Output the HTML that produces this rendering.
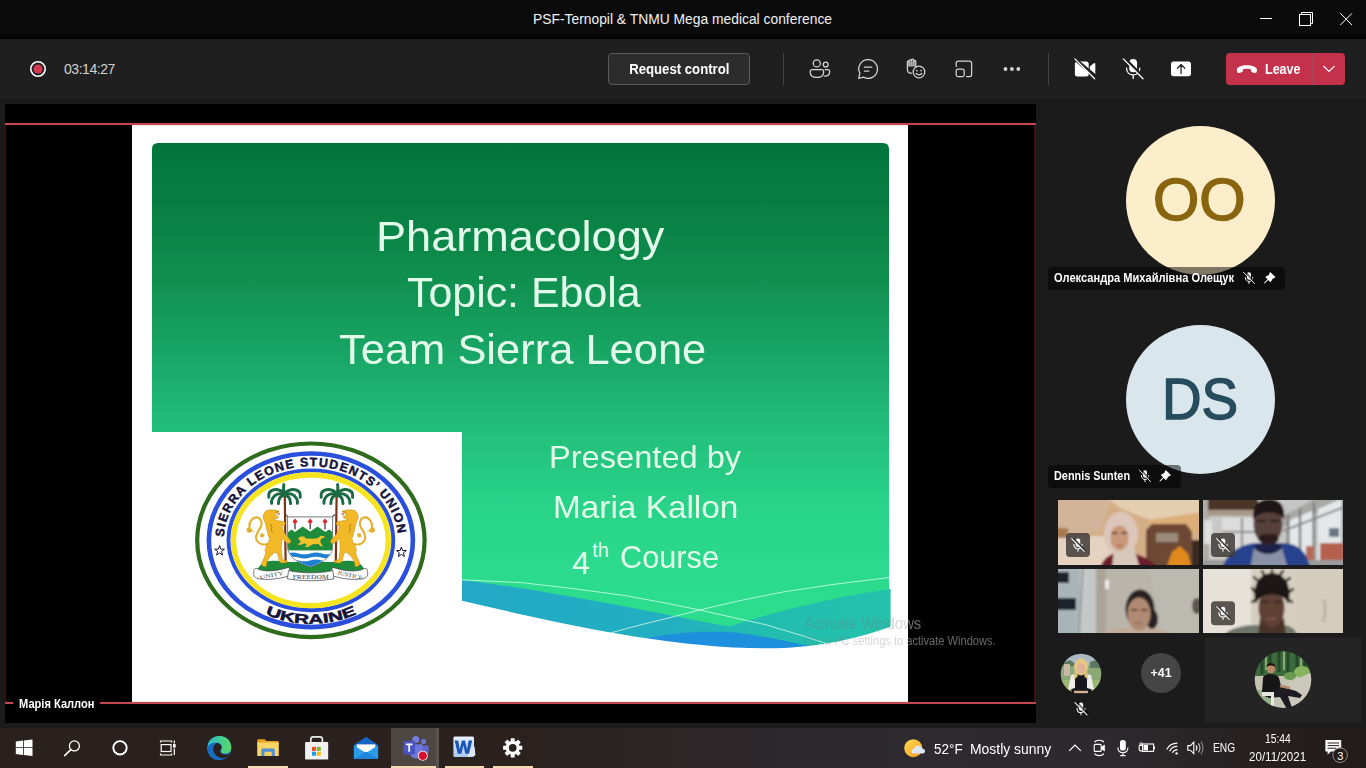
<!DOCTYPE html>
<html lang="en">
<head>
<meta charset="utf-8">
<title>PSF-Ternopil &amp; TNMU Mega medical conference</title>
<style>
*{margin:0;padding:0;box-sizing:border-box}
html,body{width:1366px;height:768px;overflow:hidden;background:#1b1b1b;font-family:"Liberation Sans",sans-serif;}
.abs{position:absolute}
#root{position:relative;width:1366px;height:768px;overflow:hidden;background:#1b1b1b}
/* title bar */
#titlebar{left:0;top:0;width:1366px;height:39px;background:linear-gradient(#0b0b0b 0,#0b0b0b 33px,#070707 34px,#060606 37px,#000 38px)}
#title{left:533px;top:10px;width:299px;height:18px;color:#f2f2f2;font-size:13.85px;line-height:18px;white-space:nowrap}
#title span{display:inline-block;transform-origin:0 50%}
/* toolbar */
#toolbar{left:0;top:39px;width:1366px;height:57px;background:#1f1f1f}
#subbar{left:0;top:96px;width:1366px;height:8px;background:linear-gradient(#222 0,#232323 2px,#1a1a1a 3px,#171717 5px,#1a1a1a 6px,#1b1b1b 8px)}
#rectime{left:64px;top:60px;color:#d2d2d2;font-size:14px;letter-spacing:-.45px;line-height:18px;white-space:nowrap}
#reqbtn{left:608px;top:53px;width:142px;height:32px;border:1px solid #5c5c5c;border-radius:4px;background:#2c2c2c;color:#fff;font-weight:bold;font-size:14px;line-height:30px;text-align:center;white-space:nowrap}
.vsep{width:1px;height:32px;top:53px;background:#454545}
#leave{left:1226px;top:53px;width:119px;height:32px;border-radius:4px;background:#c4314b}
#leave .div{left:86px;top:0;width:1px;height:32px;background:#a8485a}
#leave .txt{left:39px;top:7px;color:#fff;font-weight:bold;font-size:14px;line-height:18px}
/* stage */
#stage{left:5px;top:104px;width:1031px;height:619px;background:#000}
#slide{left:132px;top:125px;width:776px;height:577px;background:#fff;overflow:hidden}
.st{color:#e2fbea;white-space:nowrap}.st span{display:inline-block;transform-origin:0 50%}
.wm{position:absolute;top:6px;white-space:nowrap;font-size:16px;line-height:19px}.wm span{display:inline-block;transform-origin:0 50%}.wm .w1{transform:scaleX(.929)}.wm .w2{font-size:12px;line-height:15px;transform:scaleX(.924);position:relative;top:-3.4px}
.redh{height:2px;background:#c4444e}
/* right panel */
#panel{left:1036px;top:104px;width:330px;height:624px;background:#1b1b1b}
.avatar{border-radius:50%}
.big{font-size:58px;line-height:66px;white-space:nowrap}.big span{display:inline-block;transform-origin:0 50%}
.plabel span{display:inline-block;white-space:nowrap}
.plabel{height:23px;border-radius:4px;background:rgba(0,0,0,.5);color:#fff;font-size:12px;font-weight:bold;line-height:23px;white-space:nowrap}
/* taskbar */
#taskbar{left:0;top:728px;width:1366px;height:40px;background:linear-gradient(90deg,#2a201d 0,#2b211e 35%,#2c2628 52%,#2d2b2f 66%,#2c2a2d 82%,#262020 92%,#221b19 100%)}
.ul{top:766px;height:2px;background:#f7dbb0}
.tb-txt{color:#fff;white-space:nowrap}
</style>
</head>
<body>
<div id="root">

<!-- TITLE BAR -->
<div id="titlebar" class="abs"></div>
<div id="title" class="abs"><span>PSF-Ternopil &amp; TNMU Mega medical conference</span></div>
<svg class="abs" style="left:1250px;top:0" width="116" height="39" viewBox="0 0 116 39" fill="none" stroke="#fff" stroke-width="1">
  <path d="M10 18.5H22"/>
  <rect x="49.5" y="14.5" width="11" height="11"/>
  <path d="M51.5 14.5V12.5H62.5V23.5H60.5"/>
  <path d="M90.3 13.3L102 25M102 13.3L90.3 25"/>
</svg>

<!-- TOOLBAR -->
<div id="toolbar" class="abs"></div>
<div id="subbar" class="abs"></div>
<svg class="abs" style="left:28px;top:59px" width="20" height="20" viewBox="0 0 20 20"><circle cx="10" cy="10" r="7.2" fill="none" stroke="#fff" stroke-width="1.6"/><circle cx="10" cy="10" r="4.6" fill="#d6384f"/></svg>
<div id="rectime" class="abs">03:14:27</div>
<div id="reqbtn" class="abs"><span style="display:inline-block;transform:scaleX(.94)">Request control</span></div>
<div class="abs vsep" style="left:783px"></div>
<div class="abs vsep" style="left:1048px"></div>
<svg id="toolicons" class="abs" style="left:790px;top:50px" width="440" height="40" viewBox="790 50 440 40" fill="none" stroke="#d4d4d4" stroke-width="1.25" stroke-linecap="round" stroke-linejoin="round">
  <!-- people -->
  <circle cx="816.8" cy="63.4" r="3.55"/>
  <circle cx="825.7" cy="64.6" r="2.45"/>
  <path d="M812.2,69.6 H821.6 A2,2 0 0 1 823.6,71.6 V72.2 C823.6,75.6 820.6,77.4 816.9,77.4 C813.2,77.4 810.2,75.6 810.2,72.2 V71.6 A2,2 0 0 1 812.2,69.6Z"/>
  <path d="M825.2,69.7 H827.8 A1.9,1.9 0 0 1 829.7,71.6 C829.7,74.4 827.6,76.2 824.6,76.2"/>
  <!-- chat -->
  <path d="M868.2,59.7 A9.3,9.3 0 1 1 863.6,77.1 L858.6,78.4 L859.9,73.4 A9.3,9.3 0 0 1 868.2,59.7Z"/>
  <path d="M864.4,67.2 H871.8 M864.4,71.1 H868.8"/>
  <!-- reactions: hand + smiley -->
  <path d="M907.4,69.4 V62 A1.05,1.05 0 0 1 909.5,62 V60.6 A1.05,1.05 0 0 1 911.6,60.6 V60.2 A1.05,1.05 0 0 1 913.7,60.2 V61.4 A1.05,1.05 0 0 1 915.8,61.4 V66.6 M907.4,69.4 C907.4,71.8 909,73.2 911.6,73.2" />
  <path d="M909.5,62 V66 M911.6,60.6 V66 M913.7,60.4 V66" stroke-width=".9" opacity=".7"/>
  <path d="M908,61.4 H915.4 V66.6 H908Z" fill="#bdbdbd" stroke="none" opacity=".75"/>
  <circle cx="919" cy="72" r="5.8" fill="#1f1f1f"/>
  <circle cx="916.9" cy="70.6" r=".85" fill="#d4d4d4" stroke="none"/>
  <circle cx="921.1" cy="70.6" r=".85" fill="#d4d4d4" stroke="none"/>
  <path d="M916.2,73.4 C917.2,75.2 920.8,75.2 921.8,73.4"/>
  <!-- layout -->
  <path d="M956.2,66.4 V63.2 A2,2 0 0 1 958.2,61.2 H969.6 A2,2 0 0 1 971.6,63.2 V74.6 A2,2 0 0 1 969.6,76.6 H966.6"/>
  <rect x="956.2" y="69" width="8" height="7.6" rx="1.8"/>
  <!-- more -->
  <g fill="#d4d4d4" stroke="none"><circle cx="1005.5" cy="69" r="1.9"/><circle cx="1011.9" cy="69" r="1.9"/><circle cx="1018.3" cy="69" r="1.9"/></g>
  <!-- camera off -->
  <g fill="#fff" stroke="none">
    <path d="M1077.4,61.4 H1086.2 A2.5,2.5 0 0 1 1088.7,63.9 V74 A2.5,2.5 0 0 1 1086.2,76.5 H1077.4 A2.5,2.5 0 0 1 1074.9,74 V63.9 A2.5,2.5 0 0 1 1077.4,61.4Z"/>
    <path d="M1089.8,66.4 L1093.8,63.2 C1094.5,62.7 1095.3,63.1 1095.3,64 V73.9 C1095.3,74.8 1094.5,75.2 1093.8,74.7 L1089.8,71.5Z"/>
  </g>
  <path d="M1074.3,60.6 L1095.6,78.3" stroke="#1f1f1f" stroke-width="3.4" transform="translate(1.1,-1.1)"/>
  <path d="M1074.9,58.9 L1094.7,78.7" stroke="#fff" stroke-width="1.3"/>
  <!-- mic off -->
  <rect x="1129.2" y="58.9" width="7.9" height="13.4" rx="3.95" fill="#fff" stroke="none"/>
  <path d="M1126.6,68.2 C1126.6,72.4 1129.4,74.9 1133.2,74.9 C1137,74.9 1139.8,72.4 1139.8,68.2 M1133.2,75 V78.6" stroke="#fff" stroke-width="1.3"/>
  <path d="M1123.3,59.5 L1143,79.2" stroke="#1f1f1f" stroke-width="3.2" transform="translate(1.1,-1.1)"/>
  <path d="M1123.3,58.9 L1143,78.7" stroke="#fff" stroke-width="1.3"/>
  <!-- share -->
  <rect x="1171" y="61.4" width="20" height="14.8" rx="2.6" fill="#fff" stroke="none"/>
  <path d="M1181.1,73.4 V64.8 M1177.4,68.2 L1181.1,64.5 L1184.8,68.2" stroke="#2a2a2a" stroke-width="1.3"/>
</svg>
<div id="leave" class="abs"><div class="abs div"></div><div class="abs txt"><span style="display:inline-block;transform-origin:0 50%;transform:scaleX(.895)">Leave</span></div></div>

<svg class="abs" style="left:1226px;top:53px" width="119" height="32" viewBox="1226 53 119 32" fill="none">
  <path d="M1236.8,70.2 C1236.4,68 1239.6,65.2 1246.9,65.2 C1254.2,65.2 1257.4,68 1257,70.2 L1256.7,71.7 C1256.5,72.7 1255.7,73.3 1254.7,73 L1252.2,72.3 C1251.4,72.1 1250.9,71.4 1250.9,70.6 V69.3 C1248.4,68.5 1245.4,68.5 1242.9,69.3 V70.6 C1242.9,71.4 1242.4,72.1 1241.6,72.3 L1239.1,73 C1238.1,73.3 1237.3,72.7 1237.1,71.7Z" fill="#fff"/>
  <path d="M1323.8,66.4 L1329,71.4 L1334.2,66.4" stroke="#fff" stroke-width="1.3" stroke-linecap="round" stroke-linejoin="round"/>
</svg>

<!-- STAGE -->
<div id="stage" class="abs"></div>
<div id="slide" class="abs"></div>
<svg class="abs" style="left:0;top:0" width="1366" height="768" viewBox="0 0 1366 768">
  <defs>
    <linearGradient id="gg" gradientUnits="userSpaceOnUse" x1="0" y1="143" x2="0" y2="600">
      <stop offset="0" stop-color="#02763a"/>
      <stop offset="0.12" stop-color="#067d40"/>
      <stop offset="0.3" stop-color="#10904f"/>
      <stop offset="0.5" stop-color="#1aab6b"/>
      <stop offset="0.63" stop-color="#22bf7b"/>
      <stop offset="0.8" stop-color="#29d489"/>
      <stop offset="1" stop-color="#2cdd8e"/>
    </linearGradient>
    <linearGradient id="tg" gradientUnits="userSpaceOnUse" x1="462" y1="0" x2="891" y2="0">
      <stop offset="0" stop-color="#22a9c6"/>
      <stop offset="0.5" stop-color="#22b0c0"/>
      <stop offset="0.68" stop-color="#22bcb0"/>
      <stop offset="1" stop-color="#24c2ac"/>
    </linearGradient>
  </defs>
  <!-- teal base -->
  <path d="M462,570 H889 V589 H890.6 V660 H462Z" fill="url(#tg)"/>
  <!-- blue lens -->
  <path d="M640,640 C672,631.5 712,630.5 735,632.6 C760,635.5 785,641 812,646.5 V660 H640Z" fill="#1e8fdc"/>
  <!-- green -->
  <path d="M152,149 Q152,143 158,143 H883 Q889,143 889,149 V589.4 C850,594 790,607 729,626.5 C660,614 560,592 462,580 V432 H152Z" fill="url(#gg)"/>
  <!-- white below bottom curve -->
  <path d="M455,600.7 H462 C560,624 670,648 766,648.3 C810,648.5 855,640 890.6,626.5 H900 V670 H455Z" fill="#fff"/>
  <!-- thin white lines -->
  <path d="M610.7,632.9 L640,625 L665,618.9 L699.5,610 L740,600.6 L782.9,592 L833.4,584.4 L889,577.6" fill="none" stroke="#d8fff0" stroke-width="0.9" opacity=".85"/>
  <path d="M462,579.8 L522.4,582.7 L572.9,588.6 L623.4,595.3 L665,602.9 L699.5,610 L766,624.8 L800,635 L826.6,643.6" fill="none" stroke="#d8fff0" stroke-width="0.9" opacity=".85"/>
</svg>
<!--SEAL-->
<svg class="abs" style="left:152px;top:432px" width="310" height="230" viewBox="152 432 310 230">
  <defs>
    <path id="arcTop" d="M223.7,540.3 A87.2,74 0 0 1 398.1,540.3"/>
    <path id="arcBot" d="M213.4,540.3 A97.5,83.4 0 0 0 408.4,540.3"/>
    <g id="lion">
      <!-- tail -->
      <path d="M267.6,544 C263,545.4 258.6,544 256.6,540 C254.6,535.6 258,531.6 260.4,527.6 C262.6,523.8 261.6,519 257.8,517.6 C254.4,516.6 250.8,519.4 249.8,523.4 C249.2,526 249.4,528 249.8,529.6" fill="none" stroke="#e3b02c" stroke-width="2.1" stroke-linecap="round"/>
      <path d="M247,528.6 l3,-.6 l2.4,2.2 l-1.8,2.2 l-3.4,-.6z M261.2,533.4 l3,1 l-1,2.6 l-3,-.4z M247.6,523.4 l2.6,.8 M252.6,530.2 l1.4,2.4" fill="#e3b02c" stroke="#e3b02c" stroke-width=".8"/>
      <!-- body -->
      <path d="M264.1,513.1 L266.4,510.6 L270,509.8 L274.6,509.9 L279.1,511 L278.4,512.8 L275.2,513.8 L275.8,515.4 L278.6,516.8 L277.2,518.4 L273,518.6 L276,520.2 L279.7,520.9 L283.4,521.6 L285.2,522.6 L285,525 L282.4,525.2 L282.4,527.4 L283,530.4 L285.4,534.4 L288.4,537.8 L291,540.8 L290.4,543.2 L287.6,543.2 L284.4,541 L281.4,538 L281.8,540.4 L281.4,544 L281.2,548.3 L281.6,552.4 L282.2,557.4 L283,560 L286.9,560.6 L286.6,562.8 L281.4,563 L279.2,561.8 L278.6,557.8 L277.2,553.2 L274.6,552.2 L272.6,554.6 L270.2,556.6 L268.2,559.4 L266.8,562.8 L266.4,566.4 L263.4,566.6 L261.4,564.4 L262.2,561.4 L264.2,557.6 L265.6,553.6 L265,549.6 L266.6,545.4 L268.6,542 L269.4,538.4 L268,534.4 L266.8,530 L266,526.2 L265.4,522.9 L263.6,519.4 L263.2,516Z" fill="#f2b826" stroke="#b5820f" stroke-width=".45"/>
      <path d="M275.6,512.2 l2.6,-.5 M270.4,524 l1.6,3.4 l-1.2,2.6 l1.8,2.8" stroke="#9a6a10" stroke-width=".7" fill="none"/>
      <path d="M277.4,514.4 l2.6,-.6" stroke="#c8202a" stroke-width="1"/>
    </g>
    <g id="palm">
      <path d="M284.8,496 L285.6,562.6" stroke="#7a3516" stroke-width="2.2" fill="none"/>
      <g fill="none" stroke="#1b6a43" stroke-width="3" stroke-linecap="round">
        <path d="M284.4,494 C283.4,490.6 283.2,487.6 283.8,484.6"/>
        <path d="M284.3,493.6 C279.6,488.6 273.6,488.2 269.4,492.4 C268.6,494 268.6,495.8 268.8,497.2"/>
        <path d="M284.3,494.6 C279.6,492.4 274.6,494.4 272.4,498.6 C271.6,500.2 271.4,502 271.6,503.2"/>
        <path d="M284,495.6 C281,495.8 278.6,498.4 278.4,503.6"/>
        <path d="M284.6,493.6 C289.4,488.6 295.4,488.2 299.6,492.4 C300.4,494 300.4,495.8 300.2,497.2"/>
        <path d="M284.6,494.6 C289.4,492.4 294.4,494.4 296.6,498.6 C297.4,500.2 297.6,502 297.4,503.2"/>
        <path d="M285,495.6 C288,495.8 290.4,498.4 290.6,503.6"/>
      </g>
    </g>
  </defs>
  <rect x="152" y="432" width="310" height="230" fill="#fff"/>
  <!-- rings -->
  <ellipse cx="310.9" cy="540.3" rx="113.7" ry="96.8" fill="none" stroke="#2f6b1c" stroke-width="4.2"/>
  <ellipse cx="310.9" cy="540.3" rx="102" ry="86.8" fill="none" stroke="#2a4fdc" stroke-width="4.6"/>
  <ellipse cx="310.9" cy="540.3" rx="82.4" ry="69.9" fill="none" stroke="#2a4fdc" stroke-width="3.9"/>
  <ellipse cx="310.9" cy="540.3" rx="77.4" ry="65.3" fill="none" stroke="#f5e41e" stroke-width="5.4"/>
  <!-- ring text -->
  <text font-family="Liberation Sans, sans-serif" font-weight="bold" font-size="12.4" fill="#14123a" stroke="#14123a" stroke-width=".45" textLength="243" lengthAdjust="spacing"><textPath href="#arcTop" startOffset="3.5" textLength="243" lengthAdjust="spacing">SIERRA LEONE STUDENTS’ UNION</textPath></text>
  <text font-family="Liberation Sans, sans-serif" font-weight="bold" font-size="13.4" fill="#14123a" stroke="#14123a" stroke-width=".5" text-anchor="middle"><textPath href="#arcBot" startOffset="50%" textLength="94" lengthAdjust="spacingAndGlyphs">UKRAINE</textPath></text>
  <!-- stars -->
  <g fill="#fff" stroke="#14123a" stroke-width="1">
    <path id="star" d="M219.6,545.6 l1.2,3.5 l3.7,0.1 l-2.9,2.3 l1,3.6 l-3,-2.1 l-3,2.1 l1,-3.6 l-2.9,-2.3 l3.7,-0.1z"/>
    <use href="#star" x="181.8" y="1.4"/>
  </g>
  <!-- coat of arms -->
  <!-- green mound -->
  <path d="M256.5,572.5 C258,566 263,561.5 270,561 C280,560 287,562.5 292,562 L330,562 C336,562.5 343,560 352,561 C359,561.5 364,566 365.5,572.5 C350,574.5 335,571.5 322,572.5 L311,573.4 L300,572.5 C287,571.5 272,574.5 256.5,572.5Z" fill="#1e8b3b"/>
  <use href="#palm"/>
  <use href="#palm" transform="translate(621.4,0) scale(-1,1)"/>
  <!-- shield -->
  <path d="M287.6,516.9 H332.6 V547 C332.6,556 323,563 310.2,567 C297,563 287.6,556 287.6,547Z" fill="#fff" stroke="#444" stroke-width=".7"/>
  <clipPath id="shc"><path d="M288,517.3 H332.2 V547 C332.2,555.6 323,562.6 310.2,566.5 C297.4,562.6 288,555.6 288,547Z"/></clipPath>
  <g clip-path="url(#shc)">
    <path d="M287,533 L291.5,529.4 L295,532 L302.6,526.6 L310.2,531.6 L317.6,526.6 L325.4,532 L329,529.4 L334,533 V551 H287Z" fill="#1e8b3b"/>
    <rect x="287" y="550.4" width="47" height="18" fill="#fff"/>
    <path d="M287,553.4 q5.8,-1.8 11.6,0 t11.6,0 t11.6,0 t11.6,0 V557.6 q-5.8,1.8 -11.6,0 t-11.6,0 t-11.6,0 t-11.6,0Z" fill="#1f7fd0"/>
    <path d="M287,560.4 q5.8,-1.8 11.6,0 t11.6,0 t11.6,0 t11.6,0 V570 H287Z" fill="#1f7fd0"/>
    <!-- lion passant -->
    <path d="M298,538.6 l2.4,-2.2 l3.8,0.2 l1.6,1.8 l6.4,0.4 l5.4,-0.6 l3.4,-2.4 l3.2,0.4 l0.8,1.4 l-2.6,0.4 l-2.2,2.2 l0.6,3 l2.2,2.8 l-1.8,0.6 l-3,-2.6 l-5.4,0.2 l-4.6,2.8 l-3.6,0.2 l2.4,-2.4 l-2.4,-1.6 l-4.6,1.8 l-2.4,-0.6 l3.4,-2.6 l-1.6,-1.8z" fill="#f2c22a"/>
  </g>
  <!-- torches -->
  <g>
    <path d="M295,518.6 l2.5,2.9 l-2.5,2.9 l-2.5,-2.9z M310.2,518.6 l2.5,2.9 l-2.5,2.9 l-2.5,-2.9z M325,518.6 l2.5,2.9 l-2.5,2.9 l-2.5,-2.9z" fill="#e0262c"/>
    <path d="M295,524 v5.2 M310.2,524 v5.2 M325,524 v5.2" stroke="#1a1a1a" stroke-width="1.1"/>
  </g>
  <!-- small handles at shield top -->
  <path d="M287.8,516.6 l-3,-2 M332.4,516.6 l3,-2" stroke="#444" stroke-width="1.2"/>
  <!-- lions -->
  <use href="#lion"/>
  <use href="#lion" transform="translate(621.4,0) scale(-1,1)"/>
  <!-- ribbon -->
  <g fill="#fff" stroke="#3a3a46" stroke-width=".7">
    <path d="M254,571.6 C253,568.6 257,567.2 259,569.6 C268,572.4 279,570.4 289,567.2 L291,575.2 C281,578.6 268,580.6 258,578.6 C254,577.6 253,574.6 254,571.6Z"/>
    <path d="M367.4,571.6 C368.4,568.6 364.4,567.2 362.4,569.6 C353.4,572.4 342.4,570.4 332.4,567.2 L330.4,575.2 C340.4,578.6 353.4,580.6 363.4,578.6 C367.4,577.6 368.4,574.6 367.4,571.6Z"/>
    <path d="M288.6,570.6 C303,573.6 318,573.6 332.8,570.6 L334,578.8 C319,581.4 302,581.4 287.4,578.8Z"/>
  </g>
  <g font-family="Liberation Serif, serif" font-size="5.6" fill="#3a3a46" text-anchor="middle">
    <text x="310.7" y="579.4" textLength="36" lengthAdjust="spacingAndGlyphs">FREEDOM</text>
    <text x="272" y="577" transform="rotate(-12 272 577)" textLength="24" lengthAdjust="spacingAndGlyphs">UNITY</text>
    <text x="349.6" y="577" transform="rotate(12 349.6 577)" textLength="26" lengthAdjust="spacingAndGlyphs">JUSTICE</text>
  </g>
</svg>
<!--/SEAL-->
<div class="abs st" style="left:375.6px;top:210.8px;width:283px;font-size:42px;line-height:52px"><span style="transform:scaleX(1.074)">Pharmacology</span></div>
<div class="abs st" style="left:406.6px;top:266.8px;width:233px;font-size:42px;line-height:52px"><span style="transform:scaleX(1.021)">Topic: Ebola</span></div>
<div class="abs st" style="left:339px;top:323.8px;width:364px;font-size:42px;line-height:52px"><span style="transform:scaleX(1.035)">Team Sierra Leone</span></div>
<div class="abs st" style="left:548.8px;top:437.2px;font-size:32px;line-height:40px"><span style="transform:scaleX(1.019)">Presented by</span></div>
<div class="abs st" style="left:553.4px;top:487px;font-size:32px;line-height:40px"><span style="transform:scaleX(1.042)">Maria Kallon</span></div>
<div class="abs st" style="left:572px;top:542.6px;font-size:32px;line-height:40px"><span>4</span></div>
<div class="abs st" style="left:592.3px;top:537.6px;font-size:20px;line-height:24px"><span>th</span></div>
<div class="abs st" style="left:619.6px;top:536.5px;font-size:32px;line-height:40px"><span style="transform:scaleX(.96)">Course</span></div>


<!-- red frame -->
<div class="abs" style="left:5px;top:123px;width:1031px;height:2px;background:#c4464f;box-shadow:0 0 1px #7a1418"></div>
<div class="abs" style="left:5px;top:702px;width:1031px;height:2px;background:#c4464f;box-shadow:0 0 1px #7a1418"></div>
<div class="abs" style="left:4px;top:125px;width:2px;height:577px;background:#33110f"></div>
<div class="abs" style="left:1034px;top:125px;width:2.6px;height:577px;background:#3e1114"></div>
<div class="abs" style="left:13px;top:695px;width:87px;height:18px;background:#000"></div>
<div class="abs" style="left:19.3px;top:695px;color:#fff;font-weight:bold;font-size:12px;line-height:18px;white-space:nowrap"><span style="display:inline-block;transform-origin:0 50%;transform:scaleX(.925)">Марія Каллон</span></div>
<!-- watermark -->
<div class="abs" style="left:795px;top:608px;width:113px;height:44px;overflow:hidden"><div class="wm" style="left:8.5px;color:rgba(125,112,125,.30)"><span class="w1">Activate Windows</span><br><span class="w2">Go to PC settings to activate Windows.</span></div></div>
<div class="abs" style="left:908px;top:608px;width:128px;height:44px;overflow:hidden"><div class="wm" style="left:-104.5px;color:rgba(255,255,255,.40)"><span class="w1">Activate Windows</span><br><span class="w2">Go to PC settings to activate Windows.</span></div></div>

<!-- RIGHT PANEL -->
<div id="panel" class="abs"></div>
<!-- OO avatar -->
<div class="abs avatar" style="left:1126px;top:126px;width:149px;height:149px;background:#fdeecb"></div>
<div class="abs big" style="left:1153.4px;top:167.4px;font-size:59px;color:#89650f;-webkit-text-stroke:1.5px #89650f"><span style="transform:scaleX(1.01)">OO</span></div>
<!-- DS avatar -->
<div class="abs avatar" style="left:1126px;top:324.5px;width:149px;height:149px;background:#d9e6ec"></div>
<div class="abs big" style="left:1162.2px;top:365.6px;color:#264c5d;-webkit-text-stroke:1.4px #264c5d"><span style="transform:scaleX(.945)">DS</span></div>
<!-- labels -->
<div class="abs plabel" style="left:1048px;top:266.5px;width:236.6px"><span style="position:absolute;left:6.3px;top:0;transform-origin:0 50%;transform:scaleX(.925)">Олександра Михайлівна Олещук</span></div>
<div class="abs plabel" style="left:1048px;top:464.5px;width:133px"><span style="position:absolute;left:6.3px;top:0;transform-origin:0 50%;transform:scaleX(.905)">Dennis Sunten</span></div>
<svg class="abs" style="left:1036px;top:104px" width="330" height="624" viewBox="1036 104 330 624" fill="none">
  <defs>
    <g id="micoff">
      <rect x="-2" y="-5.8" width="4" height="7.6" rx="2" fill="#fff"/>
      <path d="M-3.7,-0.6 C-3.7,2 -2,3.5 0,3.5 C2,3.5 3.7,2 3.7,-0.6 M0,3.6 V5.6" stroke="#fff" stroke-width=".95" stroke-linecap="round"/>
      <path d="M-5.2,-5.4 L5.8,5.8" stroke="#000" stroke-opacity=".55" stroke-width="2.2" transform="translate(.8,-.8)"/>
      <path d="M-5.6,-5.8 L5.6,5.6" stroke="#fff" stroke-width=".95" stroke-linecap="round"/>
    </g>
    <g id="pin">
      <path d="M1.2,-5.6 L5.4,-1.4 C5.8,-1 5.7,-.4 5.2,-.2 L3.1,.7 L1.6,3.6 C1.4,4 .9,4.1 .6,3.8 L-1.3,1.9 L-4.6,5.2 L-5.5,5.5 L-5.2,4.6 L-1.9,1.3 L-3.8,-.6 C-4.1,-.9 -4,-1.4 -3.6,-1.6 L-.7,-3.1 L.2,-5.2 C.4,-5.7 1,-5.8 1.2,-5.6Z" fill="#fff"/>
    </g>
    <g id="mutebadge">
      <rect x="0" y="0" width="24" height="24" rx="4" fill="#3a3632" fill-opacity=".82"/>
      <g transform="translate(12,12) scale(1.12)"><rect x="-2" y="-5.8" width="4" height="7.6" rx="2" fill="#fff"/>
      <path d="M-3.7,-0.6 C-3.7,2 -2,3.5 0,3.5 C2,3.5 3.7,2 3.7,-0.6 M0,3.6 V5.6" stroke="#fff" stroke-width=".95" stroke-linecap="round"/>
      <path d="M-5.2,-5.4 L5.8,5.8" stroke="#3a3632" stroke-width="1.5" transform="translate(.75,-.75)"/>
      <path d="M-5.6,-5.8 L5.6,5.6" stroke="#fff" stroke-width=".95" stroke-linecap="round"/></g>
    </g>
    <clipPath id="c1"><rect x="1058" y="500" width="141" height="65"/></clipPath>
    <clipPath id="c2"><rect x="1203" y="500" width="140" height="65"/></clipPath>
    <clipPath id="c3"><rect x="1058" y="569" width="141" height="64"/></clipPath>
    <clipPath id="c4"><rect x="1203" y="569" width="140" height="64"/></clipPath>
    <clipPath id="ca1"><circle cx="1081" cy="674" r="20.3"/></clipPath>
    <clipPath id="ca2"><circle cx="1283" cy="679.6" r="28.3"/></clipPath>
    <filter id="bl1" x="-10%" y="-10%" width="120%" height="120%"><feGaussianBlur stdDeviation="1.1"/></filter>
    <filter id="bl2" x="-10%" y="-10%" width="120%" height="120%"><feGaussianBlur stdDeviation=".7"/></filter>
  </defs>
  <use href="#micoff" transform="translate(1249,278)"/>
  <use href="#pin" transform="translate(1269.5,278)"/>
  <use href="#micoff" transform="translate(1145,476)"/>
  <use href="#pin" transform="translate(1165,476)"/>
  <!-- tile 1 -->
  <g clip-path="url(#c1)"><g filter="url(#bl1)">
    <rect x="1054" y="496" width="149" height="73" fill="#d4ae86"/>
    <path d="M1054,496 H1112 L1100,530 L1054,540Z" fill="#d2b49a"/>
    <path d="M1104,496 H1203 V512 L1150,520 L1120,508Z" fill="#e4ceb0"/><path d="M1150,520 L1203,512 V532 H1150Z" fill="#dcae78"/>
    <rect x="1054" y="536" width="60" height="33" fill="#e6d2c0"/>
    <rect x="1054" y="528" width="14" height="10" fill="#a87850"/>
    <path d="M1146,530 L1152,524 H1186 L1192,532 V569 H1146Z" fill="#6d4a34"/>
    <rect x="1156" y="533" width="22" height="9" fill="#9a8a7a"/>
    <path d="M1166,569 L1172,552 L1180,546 L1188,554 L1192,569Z" fill="#e08a1e"/>
    <rect x="1192" y="540" width="10" height="29" fill="#3a2a20"/>
    <path d="M1100,569 C1102,558 1112,552 1122,552 C1136,552 1150,558 1160,569Z" fill="#6c1f2a"/>
    <ellipse cx="1121" cy="534" rx="17" ry="22" fill="#dcc6ba"/>
    <path d="M1112,569 L1114,548 H1134 L1140,569Z" fill="#d8c8bc"/>
    <ellipse cx="1119.5" cy="538" rx="9" ry="12.5" fill="#c89878"/>
    <path d="M1111.5,533 h6 M1121.5,533 h6" stroke="#3a2a24" stroke-width="1.4"/>
    <path d="M1117,545.6 h5" stroke="#a05a50" stroke-width="1.4"/>
  </g></g>
  <!-- tile 2 -->
  <g clip-path="url(#c2)"><g filter="url(#bl1)">
    <rect x="1199" y="496" width="148" height="73" fill="#c8c8c6"/>
    <rect x="1199" y="496" width="10" height="73" fill="#b0aca6"/>
    <rect x="1208" y="496" width="50" height="16" fill="#4a3626"/>
    <rect x="1208" y="510" width="50" height="6" fill="#a89888"/>
    <rect x="1222" y="518" width="40" height="30" fill="#dcdcdc"/>
    <path d="M1222,532 h40 M1242,518 v30" stroke="#8a8a88" stroke-width="2"/>
    <rect x="1204" y="520" width="8" height="24" fill="#e0e0e0"/>
    <path d="M1283,496 H1347 V569 H1283Z" fill="#c4c6c6"/>
    <path d="M1283,527 L1347,500 V496 H1320 L1283,516Z" fill="#a8a8a6"/>
    <path d="M1290,520 L1312,511 V558 H1290Z M1318,509 L1343,498 V560 H1318Z" fill="#e4e8ea"/>
    <path d="M1288,514 v50 M1300,508 v56 M1314,502 v62 M1343,496 v70" stroke="#7e807e" stroke-width="2.4"/>
    <path d="M1283,531 L1347,506" stroke="#8a8a88" stroke-width="2"/>
    <rect x="1320" y="543" width="24" height="18" fill="#b4604e"/>
    <rect x="1306" y="546" width="8" height="14" fill="#b86a58"/>
    <rect x="1329" y="528" width="10" height="9" fill="#6a7684"/>
    <rect x="1199" y="560" width="148" height="9" fill="#9a9c9c"/>
    <path d="M1222,569 C1226,552 1242,544 1256,543 H1284 C1298,544 1308,552 1310,569Z" fill="#27438c"/>
    <path d="M1250,569 L1254,548 C1262,554 1274,554 1282,548 L1288,569Z" fill="#8a90a6"/>
    <path d="M1254,548 C1262,556 1274,556 1282,548 L1280,544 H1256Z" fill="#1a2048"/>
    <ellipse cx="1268" cy="524" rx="14.5" ry="21" fill="#56403a"/>
    <path d="M1253,520 C1252,504 1260,499 1269,499 C1279,499 1286,505 1284,520 C1280,510 1258,510 1253,520Z" fill="#1e1818"/>
    <path d="M1257,521 h9 M1270,521 h9" stroke="#1a1414" stroke-width="1.6"/>
    <path d="M1258,540 C1264,546 1274,546 1279,540 L1276,534 H1261Z" fill="#2a1e1c"/>
  </g></g>
  <!-- tile 3 -->
  <g clip-path="url(#c3)"><g filter="url(#bl1)">
    <rect x="1054" y="565" width="149" height="72" fill="#b9b5aa"/>
    <rect x="1054" y="565" width="36" height="72" fill="#a9b4b8"/>
    <rect x="1080" y="565" width="18" height="72" fill="#c4c8c6"/>
    <path d="M1083,565 L1079,637" stroke="#8e9698" stroke-width="1.6"/>
    <rect x="1096" y="565" width="10" height="72" fill="#aaa498"/>
    <rect x="1054" y="572" width="15" height="11" fill="#1c222a"/>
    <rect x="1054" y="598" width="22" height="12" fill="#1c222a"/>
    <rect x="1105" y="580" width="4" height="9" fill="#e8e8e4"/>
    <path d="M1150,565 H1203 V637 H1160Z" fill="#bcbab0"/>
    <ellipse cx="1197" cy="606" rx="5" ry="8" fill="#5a5650"/>
    <path d="M1096,637 C1104,630 1118,628 1128,628 H1150 C1160,628 1170,632 1176,637Z" fill="#c2aa98"/>
    <ellipse cx="1152" cy="619" rx="6" ry="10" fill="#2a2220"/>
    <ellipse cx="1140" cy="609" rx="14.5" ry="19.5" fill="#2a2420"/>
    <ellipse cx="1139" cy="614" rx="11.5" ry="16.5" fill="#b08a72"/>
    <path d="M1131,610 h6.5 M1141,610 h6.5" stroke="#3a2c28" stroke-width="1.4"/>
    <path d="M1135,623 h7" stroke="#8a5a50" stroke-width="1.3"/>
  </g></g>
  <!-- tile 4 -->
  <g clip-path="url(#c4)"><g filter="url(#bl1)">
    <rect x="1199" y="565" width="148" height="72" fill="#d6cfc0"/>
    <rect x="1199" y="565" width="52" height="72" fill="#e6e2da"/>
    <rect x="1296" y="565" width="51" height="72" fill="#d4ccbc"/>
    <path d="M1324,600 q3,10 -1,22" stroke="#b4a898" stroke-width="2" fill="none"/>
    <path d="M1222,637 C1228,628 1244,625 1256,625 H1284 C1292,626 1296,630 1298,637Z" fill="#6e766a"/>
    <path d="M1258,637 L1260,618 H1284 L1286,637Z" fill="#4a3228"/>
    <ellipse cx="1271.5" cy="608" rx="13" ry="19.5" fill="#5e4034"/>
    <path d="M1256,604 C1251,588 1258,573 1272,573 C1286,573 1293,588 1288,604 C1284,591 1260,591 1256,604Z" fill="#1c1612"/>
    <path d="M1255,592 l-3,-4 M1258,581 l-4,-4 M1264,575 l-2,-4 M1272,574 l0,-4 M1280,575 l3,-4 M1286,581 l4,-3 M1289,592 l4,-3 M1289,600 l3,2 M1255,600 l-3,2" stroke="#1c1612" stroke-width="2.4" stroke-linecap="round"/>
    <path d="M1261,602 h8 M1274,602 h8" stroke="#2a1c18" stroke-width="1.5"/>
    <path d="M1266,619 h10" stroke="#8a5a4e" stroke-width="1.6"/>
  </g></g>
  <use href="#mutebadge" x="1066" y="533"/>
  <use href="#mutebadge" x="1211" y="533"/>
  <use href="#mutebadge" x="1211" y="601.2"/>
  <!-- small avatar 1 -->
  <g clip-path="url(#ca1)"><g filter="url(#bl2)">
    <rect x="1060" y="653" width="42" height="42" fill="#8aa878"/>
    <rect x="1060" y="653" width="42" height="12" fill="#aab8c4"/>
    <path d="M1060,664 L1070,660 L1078,666 H1060Z M1090,662 L1102,658 V668 H1090Z" fill="#5a7860"/>
    <rect x="1060" y="680" width="42" height="16" fill="#9cb874"/>
    <path d="M1064,664 h6 v12 h-6z" fill="#c8b8a8"/>
    <path d="M1071,695 L1073,676 C1074,672 1089,672 1090,676 L1092,695Z" fill="#16161a"/>
    <path d="M1068,690 L1071,675 L1075,674 L1075,688Z M1094,690 L1091,675 L1087,674 L1087,688Z" fill="#f0ece8"/>
    <ellipse cx="1081" cy="667" rx="7" ry="8.5" fill="#e4c880"/>
    <path d="M1075,668 L1074,680 L1078,676Z M1087,668 L1088,680 L1084,676Z" fill="#dcc078"/>
    <ellipse cx="1081" cy="668.4" rx="4.2" ry="5.4" fill="#e0b498"/>
    <path d="M1074,692 h14" stroke="#d8b098" stroke-width="2.4"/>
  </g></g>
  <!-- right box avatar -->
  <rect x="1205" y="637.5" width="156.4" height="85" fill="#242424"/>
  <g clip-path="url(#ca2)"><g filter="url(#bl2)">
    <rect x="1254" y="650" width="58" height="60" fill="#c4c4b4"/>
    <rect x="1254" y="650" width="58" height="26" fill="#3e6a3c"/>
    <path d="M1262,650 v24 M1270,650 v26 M1279,650 v22 M1288,650 v24 M1297,650 v26 M1305,650 v22" stroke="#24482a" stroke-width="3"/>
    <path d="M1266,650 v20 M1284,650 v20 M1301,650 v22" stroke="#86aa72" stroke-width="2"/>
    <ellipse cx="1302" cy="672" rx="8" ry="6" fill="#88b45e"/>
    <ellipse cx="1290" cy="676" rx="6" ry="4" fill="#6a9a50"/>
    <path d="M1290,682 L1312,672 V700 L1296,712 L1280,700Z" fill="#cac8ba"/>
    <path d="M1254,690 H1274 V712 H1254Z" fill="#9ab08a"/>
    <ellipse cx="1271" cy="668.6" rx="4.2" ry="5" fill="#b88868"/>
    <path d="M1266.5,667 C1266,662 1275,661.5 1275.6,667 C1273,665 1269,665 1266.5,667Z" fill="#18120e"/>
    <path d="M1262,692 L1263,678 C1264,673 1277,673 1279,678 L1282,690 L1276,696 L1266,697Z" fill="#141416"/>
    <path d="M1268,693 L1282,687 L1296,691 L1302,695 L1300,698 L1288,696 L1292,708 L1287,709 L1280,697 L1268,698Z" fill="#1a1c22"/>
    <path d="M1280,686 l10,2" stroke="#b88868" stroke-width="2.4"/>
    <path d="M1262,692 h12 v14 h-3 v-10 h-9z" fill="#e8e8e0"/>
  </g></g>
  <!-- bottom row -->
  <circle cx="1161" cy="673" r="20" fill="#454545"/>
  <use href="#micoff" transform="translate(1081,708.8) scale(1.08)"/>
</svg>
<div class="abs" style="left:1141px;top:664px;width:40px;text-align:center;color:#fff;font-weight:bold;font-size:13px;line-height:18px"><span style="display:inline-block;transform:scaleX(.95)">+41</span></div>

<!-- TASKBAR -->
<div id="taskbar" class="abs"></div>
<div class="abs" style="left:391px;top:728px;width:45px;height:40px;background:#4d4643"></div>
<div class="abs" style="left:436px;top:728px;width:2.5px;height:40px;background:#5b5450"></div>
<div class="abs ul" style="left:248px;width:40px"></div>
<div class="abs ul" style="left:391px;width:45px"></div>
<div class="abs ul" style="left:444.5px;width:39.5px"></div>
<div class="abs ul" style="left:493px;width:40px"></div>
<svg class="abs" style="left:0;top:728px" width="1366" height="40" viewBox="0 728 1366 40" fill="none">
  <defs>
    <linearGradient id="edg1" x1="0" y1="0" x2="1" y2="1"><stop offset="0" stop-color="#2fc3d8"/><stop offset=".5" stop-color="#1b82d6"/><stop offset="1" stop-color="#1560b8"/></linearGradient>
    <linearGradient id="edg2" x1="0" y1="0" x2="1" y2="0"><stop offset="0" stop-color="#2db8cc"/><stop offset=".6" stop-color="#46cf8a"/><stop offset="1" stop-color="#5fd86a"/></linearGradient>
    <linearGradient id="sun" x1="0" y1="0" x2="1" y2="1"><stop offset="0" stop-color="#ffdc58"/><stop offset="1" stop-color="#f79a16"/></linearGradient>
    <linearGradient id="wd" x1="0" y1="0" x2="0" y2="1"><stop offset="0" stop-color="#e6f1fc"/><stop offset="1" stop-color="#a9cbee"/></linearGradient>
  </defs>
  <!-- windows logo -->
  <path d="M15.8,741.6 L23,740.6 V747.3 H15.8Z M23.8,740.5 L32.5,739.5 V747.3 H23.8Z M15.8,748.1 H23 V754.9 L15.8,753.9Z M23.8,748.1 H32.5 V756 L23.8,754.9Z" fill="#fff"/>
  <!-- search -->
  <circle cx="74.4" cy="745.9" r="5" stroke="#fff" stroke-width="1.3"/>
  <path d="M70.8,749.6 L64.6,755.6" stroke="#fff" stroke-width="1.5" stroke-linecap="round"/>
  <!-- cortana -->
  <circle cx="120" cy="747.8" r="6.7" stroke="#fff" stroke-width="1.9"/>
  <!-- task view -->
  <g stroke="#fff" stroke-width="1.2">
    <rect x="161.2" y="744.6" width="9.8" height="6.9"/>
    <path d="M160.5,742.6 V741 H171.6 V742.6 M160.5,753.4 V755 H171.6 V753.4"/>
    <path d="M174.3,740.4 V743.4 M174.3,748.6 V755.1"/>
    <rect x="173.4" y="744.6" width="1.8" height="2.6" fill="#fff" stroke-width=".8"/>
  </g>
  <!-- edge -->
  <g>
    <circle cx="219.3" cy="748" r="12" fill="url(#edg1)"/>
    <path d="M208,744 C210,738.6 215,736 219.6,736 C226.6,736 231.3,741.2 231.3,747.4 C231.3,751.4 228.4,753.6 225,753.6 C222,753.6 220.4,752 220.6,750.4 C221.4,749.8 222,748.4 222,747 C222,744.4 219.6,742.4 216.4,742.4 C212.6,742.4 209.4,744.6 208,747.6Z" fill="url(#edg2)"/>
    <path d="M216.6,742.9 C219.6,742.9 221.6,744.8 221.6,747 C221.6,748.2 221.1,749.4 220.4,750 C220,752.6 222.4,754.8 226,754.6 C227.6,754.5 229,754 230,753.4 C228,757 224.4,758.6 221,758 C216,757.2 212.8,753 213,748.6 C213.1,746 214.6,743.6 216.6,742.9Z" fill="#2a211e"/>
    <path d="M213,748.6 C212.8,753 216,757.2 221,758 C222.4,758.2 223.8,758.1 225,757.7 C221.4,760.6 215,760.8 211,757 C208,754 207.2,749.4 208.4,746 C209.6,743.6 213,742.2 216.6,742.9 C214.6,743.6 213.1,746 213,748.6Z" fill="#176bc4"/>
  </g>
  <!-- explorer -->
  <g>
    <path d="M257.2,740.6 C257.2,739.8 257.8,739.2 258.6,739.2 H264.6 L266.4,741 H277.4 C278.2,741 278.8,741.6 278.8,742.4 V744 H257.2Z" fill="#e9a41c"/>
    <rect x="257.2" y="742.6" width="21.6" height="13.4" rx=".8" fill="#f9d466"/>
    <path d="M261.4,756 V750 C261.4,749.2 262,748.6 262.8,748.6 H273.4 C274.2,748.6 274.8,749.2 274.8,750 V756 H271.6 V751.8 H264.6 V756Z" fill="#4d92d4"/>
    <rect x="264.6" y="753" width="7" height="3" fill="#f7cf5a"/>
  </g>
  <!-- store -->
  <g>
    <path d="M310.8,742.4 V739.4 C310.8,737.9 311.9,736.9 313.4,736.9 H319.8 C321.3,736.9 322.4,737.9 322.4,739.4 V742.4" stroke="#e9e9e9" stroke-width="1.7"/>
    <rect x="305.1" y="741.9" width="23.1" height="17.6" rx=".8" fill="#f1f1f1"/>
    <rect x="312" y="746.9" width="4" height="4" fill="#f04e25"/>
    <rect x="316.8" y="746.9" width="4" height="4" fill="#7fba2c"/>
    <rect x="312" y="751.7" width="4" height="4" fill="#18a2ea"/>
    <rect x="316.8" y="751.7" width="4" height="4" fill="#fdb913"/>
  </g>
  <!-- mail -->
  <g>
    <path d="M353.9,745 L366,736.8 L378.1,745 V759 H353.9Z" fill="#1766c4"/>
    <path d="M356.6,744.4 H375.4 V754 H356.6Z" fill="#fff"/>
    <path d="M353.9,745.2 L366,753 L378.1,745.2 V759 H353.9Z" fill="#2b9be9"/>
    <path d="M353.9,759 L366,751.6 L378.1,759Z" fill="#1d86dc"/>
  </g>
  <!-- teams -->
  <g>
    <circle cx="423.5" cy="741.6" r="2.5" fill="#6e76dc"/>
    <path d="M419.6,745.4 H427.4 C428,745.4 428.5,745.9 428.5,746.5 V751.4 C428.5,753.8 426.8,755.4 424.6,755.4 C422.2,755.4 420.2,753.6 419.6,751.4Z" fill="#6068d0"/>
    <circle cx="415.8" cy="739.5" r="3.5" fill="#767ee2"/>
    <path d="M409.8,744.2 H421.6 C422.3,744.2 422.8,744.7 422.8,745.4 V752.4 C422.8,755.8 420,758.4 416.4,758.4 C412.8,758.4 409.8,755.8 409.8,752.4Z" fill="#7078dc"/>
    <rect x="403.3" y="741" width="11.8" height="13.4" rx="1.2" fill="#4b53c2"/>
    <path d="M405.9,744.4 H412.5 M409.2,744.4 V751.8" stroke="#fff" stroke-width="1.7"/>
    <circle cx="422.8" cy="755.8" r="5" fill="#fff"/>
    <circle cx="422.8" cy="755.8" r="4.2" fill="#dc1030"/>
  </g>
  <!-- word -->
  <g>
    <path d="M453.4,738.2 C453.4,737.3 454.1,736.6 455,736.6 H472.4 C473.3,736.6 474,737.3 474,738.2 V755.4 C474,756.3 473.3,757 472.4,757 H455 C454.1,757 453.4,756.3 453.4,755.4Z" fill="url(#wd)"/>
    <path d="M467,750 L474.6,746.6 L475.4,755.6 L468.4,757.2Z" fill="#dfe9f4"/>
    <path d="M454.6,740.6 L458.2,740.6 L459.8,749.4 L461.8,740.6 L465,740.6 L467,749.4 L468.6,740.6 L472.2,740.6 L469,753.8 L465.4,753.8 L463.4,745.6 L461.4,753.8 L457.8,753.8Z" fill="#1956b8"/>
  </g>
  <!-- settings gear -->
  <g transform="translate(512.7,747.8)">
    <g fill="#fff">
      <rect x="-2" y="-9.6" width="4" height="5" rx=".6"/>
      <rect x="-2" y="-9.6" width="4" height="5" rx=".6" transform="rotate(45)"/>
      <rect x="-2" y="-9.6" width="4" height="5" rx=".6" transform="rotate(90)"/>
      <rect x="-2" y="-9.6" width="4" height="5" rx=".6" transform="rotate(135)"/>
      <rect x="-2" y="-9.6" width="4" height="5" rx=".6" transform="rotate(180)"/>
      <rect x="-2" y="-9.6" width="4" height="5" rx=".6" transform="rotate(225)"/>
      <rect x="-2" y="-9.6" width="4" height="5" rx=".6" transform="rotate(270)"/>
      <rect x="-2" y="-9.6" width="4" height="5" rx=".6" transform="rotate(315)"/>
    </g>
    <circle r="5.5" stroke="#fff" stroke-width="3.2"/>
  </g>
  <!-- weather -->
  <circle cx="913.3" cy="748.2" r="9" fill="url(#sun)"/>
  <path d="M914.2,753.6 C912.4,753.6 911.4,752.4 911.4,751.2 C911.4,749.8 912.6,748.8 914,748.9 C914.4,747 916,745.6 918,745.6 C920,745.6 921.6,746.8 922,748.6 C923.8,748.6 925,749.8 925,751.2 C925,752.6 923.8,753.6 922.4,753.6Z" fill="#dbe7f7"/>
  <!-- chevron -->
  <path d="M1069.2,750.9 L1075,745.1 L1080.8,750.9" stroke="#fff" stroke-width="1.3"/>
  <!-- meet now -->
  <g stroke="#fff" stroke-width="1.1">
    <rect x="1094.2" y="744.4" width="7" height="7" rx="1"/>
    <path d="M1101.4,747 L1104.6,745 V751 L1101.4,749Z" fill="#fff" stroke-width=".6"/>
    <path d="M1094.6,742.2 C1095.4,740.6 1097,740.2 1099.2,740.2 C1101.4,740.2 1103,740.6 1103.8,742.2 M1094.6,753.6 C1095.4,755.2 1097,755.6 1099.2,755.6 C1101.4,755.6 1103,755.2 1103.8,753.6"/>
  </g>
  <!-- mic -->
  <rect x="1120" y="740" width="5.8" height="10.6" rx="2.6" fill="#fff"/>
  <path d="M1117.9,747.6 C1117.9,750.8 1120,752.8 1122.9,752.8 C1125.8,752.8 1127.9,750.8 1127.9,747.6 M1122.9,752.8 V755.4 M1120.2,755.6 H1125.6" stroke="#fff" stroke-width="1.1"/>
  <!-- battery -->
  <g stroke="#fff" stroke-width="1.1">
    <rect x="1142.6" y="744" width="11" height="7.4"/>
    <path d="M1154.2,746.2 V749.2" stroke-width="1.4"/>
    <rect x="1143.6" y="745" width="4.4" height="5.4" fill="#fff" stroke="none"/>
    <path d="M1139.2,745.4 H1142.4 M1139.2,745.4 V749 C1139.2,750.4 1140,751 1141.4,751 H1142.6 M1140.2,742.6 V745 M1142,742.6 V745" />
  </g>
  <!-- wifi -->
  <g stroke="#fff" stroke-width="1.2">
    <path d="M1166.8,749.6 C1168.6,745.6 1172.6,743.2 1177.4,743.2"/>
    <path d="M1169.6,751.2 C1171,748.2 1174,746.4 1177.4,746.4" />
    <path d="M1172.4,752.8 C1173.4,750.8 1175.2,749.6 1177.4,749.6"/>
    <circle cx="1176.6" cy="753.4" r="1.2" fill="#fff" stroke="none"/>
  </g>
  <!-- volume -->
  <g stroke="#fff" stroke-width="1.1">
    <path d="M1187.8,745.6 H1190.4 L1193.8,742.2 V753.6 L1190.4,750.2 H1187.8Z"/>
    <path d="M1196,745.4 C1197,746.8 1197,749 1196,750.4"/>
    <path d="M1198.4,743.4 C1200.2,746 1200.2,749.8 1198.4,752.4" opacity=".75"/>
    <path d="M1200.9,741.6 C1203.4,745.4 1203.4,750.4 1200.9,754.2" opacity=".45"/>
  </g>
  <!-- notifications -->
  <path d="M1325.4,740 H1341.2 V751.4 H1331 L1327.6,754.8 V751.4 H1325.4Z" fill="#fff"/>
  <path d="M1327.6,743 H1339 M1327.6,745.6 H1339 M1327.6,748.2 H1336" stroke="#2a211e" stroke-width="1"/>
  <circle cx="1340.1" cy="755.2" r="7.3" fill="#241c1a" stroke="#8e8a88" stroke-width="1"/>
</svg>
<div class="abs tb-txt" style="left:934.3px;top:739.5px;font-size:14.5px;line-height:18px"><span style="display:inline-block;transform-origin:0 50%;transform:scaleX(.93)">52°F</span></div>
<div class="abs tb-txt" style="left:970.2px;top:739.5px;font-size:14.5px;line-height:18px"><span id="ms" style="display:inline-block;transform-origin:0 50%;transform:scaleX(.96)">Mostly sunny</span></div>
<div class="abs tb-txt" style="left:1213.4px;top:740.5px;font-size:12px;line-height:14px"><span id="eng" style="display:inline-block;transform-origin:0 50%;transform:scaleX(.85)">ENG</span></div>
<div class="abs tb-txt" style="left:1265px;top:731.5px;font-size:12px;line-height:14px"><span id="tm" style="display:inline-block;transform-origin:0 50%;transform:scaleX(.86)">15:44</span></div>
<div class="abs tb-txt" style="left:1249px;top:750px;font-size:12px;line-height:14px"><span id="dt" style="display:inline-block;transform-origin:0 50%;transform:scaleX(.965)">20/11/2021</span></div>
<div class="abs tb-txt" style="left:1335px;top:748.5px;width:10.4px;text-align:center;font-size:11px;line-height:14px">3</div>

</div>
</body>
</html>
